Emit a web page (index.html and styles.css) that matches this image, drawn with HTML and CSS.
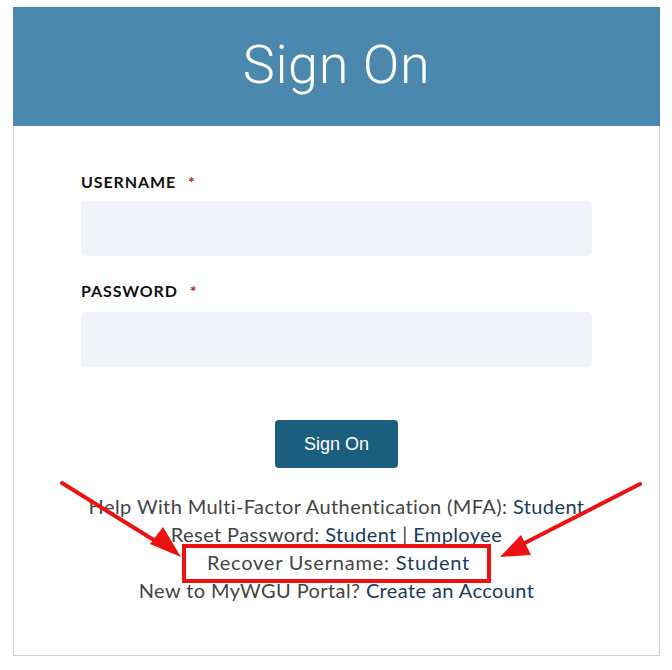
FILE: index.html
```html
<!DOCTYPE html>
<html>
<head>
<meta charset="utf-8">
<link rel="stylesheet" href="styles.css">
</head>
<body>
<div class="page">
  <div class="card">
    <div class="card-header"><h1 class="title">Sign On</h1></div>
    <form class="form">
      <div class="field">
        <label class="label">USERNAME <span class="req">*</span></label>
        <div class="input"></div>
      </div>
      <div class="field field-pw">
        <label class="label">PASSWORD <span class="req">*</span></label>
        <div class="input"></div>
      </div>
      <div class="actions"><button type="button" class="btn">Sign On</button></div>
      <div class="links">
        <p class="line">Help With Multi-Factor Authentication (MFA): <a class="link">Student</a></p>
        <p class="line">Reset Password: <a class="link">Student</a> | <a class="link">Employee</a></p>
        <p class="line"><span class="highlight">Recover Username: <a class="link">Student</a></span></p>
        <p class="line">New to MyWGU Portal? <a class="link">Create an Account</a></p>
      </div>
    </form>
  </div>
  <svg class="arrows" width="672" height="670" viewBox="0 0 672 670">
    <line x1="62" y1="483" x2="165" y2="547" stroke="#ee1111" stroke-width="4" stroke-linecap="round"/>
    <polygon points="181,557 150,544 163,527" fill="#ee1111"/>
    <line x1="640" y1="484" x2="515" y2="548" stroke="#ee1111" stroke-width="4" stroke-linecap="round"/>
    <polygon points="500,557 521,535 531,555" fill="#ee1111"/>
  </svg>
</div>
</body>
</html>
```

FILE: styles.css
```css
* { box-sizing: border-box; }
html, body { margin: 0; padding: 0; background: #fff; }
.page {
  position: relative;
  width: 672px;
  height: 670px;
  padding: 7px 12px 0 13px;
}
.card {
  width: 647px;
  height: 649px;
  border: 1px solid #cfcfcf;
  border-top: none;
  background: #fff;
}
.card-header {
  height: 119px;
  margin: 0 -1px;
  background: #4a88ae;
  display: flex;
  align-items: center;
  justify-content: center;
}
.title {
  margin: 0;
  color: #fff;
  font-family: Roboto, "Liberation Sans", sans-serif;
  font-weight: 300;
  font-size: 54px;
  letter-spacing: 0.6px;
  line-height: 1;
  padding-bottom: 4px;
}
.form {
  padding: 46px 67px 0 67px;
  font-family: Lato, "Liberation Sans", sans-serif;
}
.field { display: flex; flex-direction: column; }
.field-pw { margin-top: 25px; }
.label {
  font-size: 16px;
  font-weight: 700;
  color: #111;
  line-height: 20px;
  height: 20px;
  margin-bottom: 9px;
  letter-spacing: 0.9px;
}
.field-pw .label { margin-bottom: 11px; }
.req { color: #b3182b; margin-left: 7px; }
.input {
  height: 55px;
  background: #eff3f7;
  border-radius: 5px;
}
.actions {
  display: flex;
  justify-content: center;
  margin-top: 53px;
}
.btn {
  width: 123px;
  height: 48px;
  border: none;
  border-radius: 4px;
  background: #1b5e7e;
  color: #fff;
  font-family: "Liberation Sans", Arial, sans-serif;
  font-size: 18px;
  padding: 0;
}
.links {
  margin-top: 24px;
  text-align: center;
  color: #444;
  font-size: 20px;
  letter-spacing: 0.4px;
}
.line { margin: 0; line-height: 28px; height: 28px; white-space: nowrap; }
.link { color: #183b5b; }
.highlight {
  display: inline-block;
  outline: 4px solid #ee1111;
  outline-offset: 0;
  padding: 1px 17px 4px 21px;
  line-height: 26px;
  margin-top: 0;
  position: relative;
  letter-spacing: 0.8px;
}
.arrows { position: absolute; left: 0; top: 0; pointer-events: none; }
```
